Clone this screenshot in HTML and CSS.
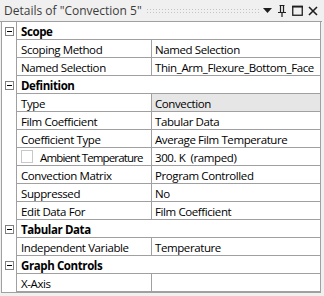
FILE: index.html
```html
<!DOCTYPE html>
<html>
<head>
<meta charset="utf-8">
<link rel="stylesheet" href="styles.css">
</head>
<body>
<div class="panel">
  <div class="titlebar">
    <span class="title">Details of "Convection 5"</span>
    <span class="grip"></span>
    <span class="tb-icons">
      <svg width="9" height="6" viewBox="0 0 9 6"><path d="M0 0H9L4.5 5Z" fill="#1e1e1e"/></svg>
      <svg width="10" height="12" viewBox="0 0 10 12"><path d="M2.5 0.5H7.5M3.5 0.5V7M6.5 0.5V7M1 7.5H9M5 7.5V12" stroke="#1e1e1e" stroke-width="1.2" fill="none"/></svg>
      <svg width="11" height="11" viewBox="0 0 11 11"><rect x="0.75" y="1.25" width="9.5" height="9" fill="none" stroke="#1e1e1e" stroke-width="1.3"/><line x1="0" y1="1.8" x2="11" y2="1.8" stroke="#1e1e1e" stroke-width="1.5"/></svg>
      <svg width="10" height="10" viewBox="0 0 10 10"><path d="M1 1L9 9M9 1L1 9" stroke="#1e1e1e" stroke-width="1.6"/></svg>
    </span>
  </div>
  <div class="grid">
    <div class="row cat"><span class="gut"><span class="tog"></span></span><span class="catname">Scope</span></div>
    <div class="row"><span class="gut"></span><span class="name">Scoping Method</span><span class="val">Named Selection</span></div>
    <div class="row"><span class="gut"></span><span class="name">Named Selection</span><span class="val">Thin_Arm_Flexure_Bottom_Face</span></div>
    <div class="row cat"><span class="gut"><span class="tog"></span></span><span class="catname">Definition</span></div>
    <div class="row"><span class="gut"></span><span class="name">Type</span><span class="val sel">Convection</span></div>
    <div class="row"><span class="gut"></span><span class="name">Film Coefficient</span><span class="val">Tabular Data</span></div>
    <div class="row"><span class="gut"></span><span class="name">Coefficient Type</span><span class="val">Average Film Temperature</span></div>
    <div class="row"><span class="gut"></span><span class="name"><span class="chk"></span><span class="tight">Ambient Temperature</span></span><span class="val">300. K&nbsp;&nbsp;(ramped)</span></div>
    <div class="row"><span class="gut"></span><span class="name">Convection Matrix</span><span class="val">Program Controlled</span></div>
    <div class="row"><span class="gut"></span><span class="name">Suppressed</span><span class="val">No</span></div>
    <div class="row"><span class="gut"></span><span class="name">Edit Data For</span><span class="val">Film Coefficient</span></div>
    <div class="row cat"><span class="gut"><span class="tog"></span></span><span class="catname">Tabular Data</span></div>
    <div class="row"><span class="gut"></span><span class="name">Independent Variable</span><span class="val">Temperature</span></div>
    <div class="row cat"><span class="gut"><span class="tog"></span></span><span class="catname">Graph Controls</span></div>
    <div class="row"><span class="gut"></span><span class="name">X-Axis</span><span class="val"></span></div>
  </div>
</div>
</body>
</html>
```
FILE: styles.css
```css
html, body {
  margin: 0;
  padding: 0;
  background: #f0f0f0;
}
.panel {
  width: 324px;
  height: 296px;
  background: #f0f0f0;
  font-family: "Open Sans", "Noto Sans", sans-serif;
  font-size: 11.5px;
  letter-spacing: -0.4px;
  color: #000;
  overflow: hidden;
}
.titlebar {
  height: 22px;
  display: flex;
  align-items: center;
  padding-left: 4px;
  padding-right: 4px;
  box-sizing: border-box;
  border-bottom: 1px solid #a0a0a0;
  margin-right: 2px;
}
.title {
  color: #3c3c3c;
  font-size: 12px;
  letter-spacing: 0;
  white-space: nowrap;
}
.grip {
  flex: 1;
  height: 5px;
  margin: 0 4px 0 4px;
  background-image: radial-gradient(circle, #c4c4c4 0.5px, transparent 0.7px);
  background-size: 3px 3px;
}
.tb-icons {
  display: flex;
  align-items: center;
  gap: 5px;
}
.tb-icons svg { display: block; }
.grid {
  margin-left: 1px;
  width: 320px;
  background: #fff;
  border-left: 1px solid #a0a0a0;
  border-right: 1px solid #a0a0a0;
  border-bottom: 1px solid #a0a0a0;
  box-sizing: border-box;
}
.row {
  display: flex;
  height: 18px;
  box-sizing: border-box;
}
.gut {
  width: 15px;
  flex: none;
  border-right: 1px solid #a0a0a0;
  display: flex;
  align-items: center;
  justify-content: center;
  box-sizing: border-box;
}
.tog {
  width: 9px;
  height: 9px;
  border: 1px solid #808080;
  box-sizing: border-box;
  position: relative;
  background: #fff;
}
.tog::after {
  content: "";
  position: absolute;
  left: 1px;
  right: 1px;
  top: 3px;
  height: 1px;
  background: #000;
}
.name {
  width: 135px;
  flex: none;
  box-sizing: border-box;
  border-right: 1px solid #a0a0a0;
  border-bottom: 1px solid #a0a0a0;
  padding-left: 4px;
  padding-top: 1px;
  display: flex;
  align-items: center;
  white-space: nowrap;
  overflow: hidden;
}
.val {
  flex: 1;
  box-sizing: border-box;
  border-bottom: 1px solid #a0a0a0;
  padding-left: 3px;
  padding-top: 1px;
  display: flex;
  align-items: center;
  white-space: nowrap;
}
.val.sel { background: #e6e6e6; }
.catname {
  flex: 1;
  font-weight: bold;
  padding-left: 4px;
  padding-top: 1px;
  border-bottom: 1px solid #a0a0a0;
  display: flex;
  align-items: center;
}
.chk {
  width: 12px;
  height: 13px;
  border: 1px solid #c8c8c8;
  box-sizing: border-box;
  background: #fff;
  margin-right: 7px;
  margin-top: -1px;
  flex: none;
}
.tight {
  letter-spacing: -0.85px;
}
```
